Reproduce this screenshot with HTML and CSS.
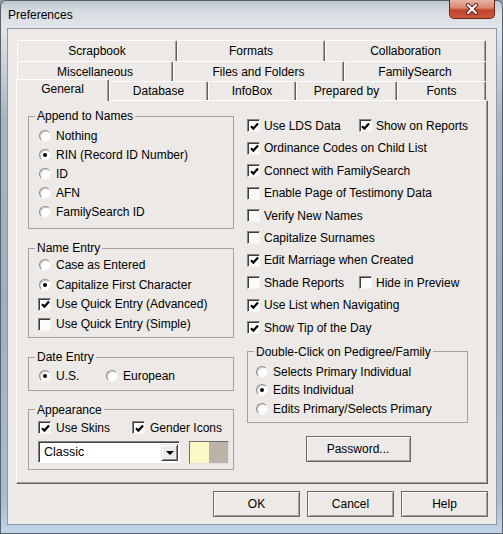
FILE: index.html
```html
<!DOCTYPE html>
<html>
<head>
<meta charset="utf-8">
<title>Preferences</title>
<link rel="stylesheet" href="styles.css">
</head>
<body>
<div class="window">
  <div class="titlebar">
    <span class="title">Preferences</span>
    <span class="close">
      <svg width="16" height="12" viewBox="0 0 16 12">
        <path d="M4 2 L12 10 M12 2 L4 10" stroke="#5a1a10" stroke-width="4" stroke-linecap="round" fill="none"/>
        <path d="M4 2 L12 10 M12 2 L4 10" stroke="#ffffff" stroke-width="2.2" stroke-linecap="round" fill="none"/>
      </svg>
    </span>
  </div>
  <div class="client">
    <div class="tabrow r1">
      <div class="tab w-scrap">Scrapbook</div>
      <div class="tab w-formats">Formats</div>
      <div class="tab w-collab">Collaboration</div>
    </div>
    <div class="tabrow r2">
      <div class="tab w-misc">Miscellaneous</div>
      <div class="tab w-files">Files and Folders</div>
      <div class="tab w-fs">FamilySearch</div>
    </div>
    <div class="tabrow r3">
      <div class="tab sel w-general">General</div>
      <div class="tab w-db">Database</div>
      <div class="tab w-info">InfoBox</div>
      <div class="tab w-prep">Prepared by</div>
      <div class="tab w-fonts">Fonts</div>
    </div>
    <div class="panel">
      <div class="col-left">
        <fieldset class="group g-append">
          <legend>Append to Names</legend>
          <div class="items">
            <div class="opt"><span class="radio"></span>Nothing</div>
            <div class="opt"><span class="radio on"></span>RIN (Record ID Number)</div>
            <div class="opt"><span class="radio"></span>ID</div>
            <div class="opt"><span class="radio"></span>AFN</div>
            <div class="opt"><span class="radio"></span>FamilySearch ID</div>
          </div>
        </fieldset>
        <fieldset class="group g-name">
          <legend>Name Entry</legend>
          <div class="items">
            <div class="opt"><span class="radio"></span>Case as Entered</div>
            <div class="opt"><span class="radio on"></span>Capitalize First Character</div>
            <div class="opt"><span class="check on"><svg width="9" height="9" viewBox="0 0 9 9"><path d="M1 4.2 L3.4 6.6 L8 1.6" stroke="#000" stroke-width="2.2" fill="none"/></svg></span>Use Quick Entry (Advanced)</div>
            <div class="opt"><span class="check"></span>Use Quick Entry (Simple)</div>
          </div>
        </fieldset>
        <fieldset class="group g-date">
          <legend>Date Entry</legend>
          <div class="items">
            <div class="opt">
              <span class="cell w-us"><span class="radio on"></span>U.S.</span>
              <span class="cell"><span class="radio"></span>European</span>
            </div>
          </div>
        </fieldset>
        <fieldset class="group g-appear">
          <legend>Appearance</legend>
          <div class="items">
            <div class="opt">
              <span class="cell w-skins"><span class="check on"><svg width="9" height="9" viewBox="0 0 9 9"><path d="M1 4.2 L3.4 6.6 L8 1.6" stroke="#000" stroke-width="2.2" fill="none"/></svg></span>Use Skins</span>
              <span class="cell"><span class="check on"><svg width="9" height="9" viewBox="0 0 9 9"><path d="M1 4.2 L3.4 6.6 L8 1.6" stroke="#000" stroke-width="2.2" fill="none"/></svg></span>Gender Icons</span>
            </div>
            <div class="skinrow">
              <div class="combo">
                <span class="combo-text">Classic</span>
                <span class="combo-btn"><span class="tri"></span></span>
              </div>
              <div class="swatch"><span class="sw-a"></span><span class="sw-b"></span></div>
            </div>
          </div>
        </fieldset>
      </div>
      <div class="col-right">
        <div class="rows">
          <div class="row">
            <span class="cell w-pair"><span class="check on"><svg width="9" height="9" viewBox="0 0 9 9"><path d="M1 4.2 L3.4 6.6 L8 1.6" stroke="#000" stroke-width="2.2" fill="none"/></svg></span>Use LDS Data</span>
            <span class="cell"><span class="check on"><svg width="9" height="9" viewBox="0 0 9 9"><path d="M1 4.2 L3.4 6.6 L8 1.6" stroke="#000" stroke-width="2.2" fill="none"/></svg></span>Show on Reports</span>
          </div>
          <div class="row"><span class="check on"><svg width="9" height="9" viewBox="0 0 9 9"><path d="M1 4.2 L3.4 6.6 L8 1.6" stroke="#000" stroke-width="2.2" fill="none"/></svg></span>Ordinance Codes on Child List</div>
          <div class="row"><span class="check on"><svg width="9" height="9" viewBox="0 0 9 9"><path d="M1 4.2 L3.4 6.6 L8 1.6" stroke="#000" stroke-width="2.2" fill="none"/></svg></span>Connect with FamilySearch</div>
          <div class="row"><span class="check"></span>Enable Page of Testimony Data</div>
          <div class="row"><span class="check"></span>Verify New Names</div>
          <div class="row"><span class="check"></span>Capitalize Surnames</div>
          <div class="row"><span class="check on"><svg width="9" height="9" viewBox="0 0 9 9"><path d="M1 4.2 L3.4 6.6 L8 1.6" stroke="#000" stroke-width="2.2" fill="none"/></svg></span>Edit Marriage when Created</div>
          <div class="row">
            <span class="cell w-pair2"><span class="check"></span>Shade Reports</span>
            <span class="cell"><span class="check"></span>Hide in Preview</span>
          </div>
          <div class="row"><span class="check on"><svg width="9" height="9" viewBox="0 0 9 9"><path d="M1 4.2 L3.4 6.6 L8 1.6" stroke="#000" stroke-width="2.2" fill="none"/></svg></span>Use List when Navigating</div>
          <div class="row"><span class="check on"><svg width="9" height="9" viewBox="0 0 9 9"><path d="M1 4.2 L3.4 6.6 L8 1.6" stroke="#000" stroke-width="2.2" fill="none"/></svg></span>Show Tip of the Day</div>
        </div>
        <fieldset class="group g-dbl">
          <legend>Double-Click on Pedigree/Family</legend>
          <div class="items">
            <div class="opt"><span class="radio"></span>Selects Primary Individual</div>
            <div class="opt"><span class="radio on"></span>Edits Individual</div>
            <div class="opt"><span class="radio"></span>Edits Primary/Selects Primary</div>
          </div>
        </fieldset>
        <div class="pwrow"><div class="btn btn-pw">Password...</div></div>
      </div>
    </div>
    <div class="buttons">
      <div class="btn">OK</div>
      <div class="btn">Cancel</div>
      <div class="btn">Help</div>
    </div>
  </div>
</div>
</body>
</html>
```

FILE: styles.css
```css
* { box-sizing: border-box; }
html, body { margin: 0; padding: 0; }
body {
  width: 503px;
  height: 534px;
  overflow: hidden;
  font-family: "Liberation Sans", Arial, sans-serif;
  font-size: 12px;
  color: #000;
  background: #8e9cab;
}
.window {
  width: 503px;
  height: 534px;
  display: flex;
  flex-direction: column;
  background: linear-gradient(to bottom, #b9c3cd 0px, #d9dee3 12px, #e2e5e8 28px, #a9b4c1 120px, #9fafc0 300px, #a8bdd2 500px, #c2d6ea 534px);
  border-radius: 6px 6px 0 0;
  box-shadow: inset 0 0 0 1px #56616d;
}
.titlebar {
  height: 28px;
  display: flex;
  justify-content: space-between;
  align-items: flex-start;
  padding-left: 8px;
  flex: none;
}
.title {
  margin-top: 8px;
  line-height: 14px;
  font-size: 12px;
  color: #000;
}
.close {
  width: 46px;
  height: 19px;
  margin-right: 8px;
  border: 1px solid #6b2418;
  border-top: none;
  border-radius: 0 0 5px 5px;
  background: linear-gradient(to bottom, #e7b3a6 0%, #d78471 45%, #c0452c 55%, #c9573c 100%);
  display: flex;
  align-items: center;
  justify-content: center;
}
.client {
  width: 490px;
  height: 497px;
  margin-left: 7px;
  background: #ece9e6;
  border: 1px solid #8d99a6;
  padding-top: 11px;
  flex: none;
}
.tabrow {
  display: flex;
  margin-left: 9px;
}
.r1 { height: 21px; }
.r2 { height: 20px; }
.r3 { height: 19px; margin-left: 8px; }
.tab {
  background: #ece9e6;
  border-top: 1px solid #fff;
  border-left: 1px solid #fff;
  border-right: 1px solid #5f5f5f;
  box-shadow: inset -1px 0 0 #a3a19e;
  border-radius: 2px 2px 0 0;
  text-align: center;
  line-height: 20px;
  white-space: nowrap;
}
.r3 .tab { line-height: 19px; }
.tab.sel {
  position: relative;
  z-index: 1;
  margin-top: -2px;
  height: 22px;
  line-height: 18px;
}
.w-scrap { width: 160px; }
.w-formats { width: 148px; }
.w-collab { width: 161px; }
.w-misc { width: 156px; }
.w-files { width: 171px; }
.w-fs { width: 142px; }
.w-general { width: 93px; }
.w-db { width: 99px; }
.w-info { width: 88px; }
.w-prep { width: 101px; }
.w-fonts { width: 89px; }

.panel {
  width: 472px;
  height: 384px;
  margin-left: 8px;
  border: 1px solid;
  border-color: #fff #5f5f5f #5f5f5f #fff;
  box-shadow: inset -1px -1px 0 #a3a19e;
  padding: 8px 0 0 11px;
  display: flex;
  gap: 13px;
}
.col-left {
  width: 206px;
  display: flex;
  flex-direction: column;
  gap: 12px;
}
.col-right {
  width: 221px;
  display: flex;
  flex-direction: column;
}
.group {
  margin: 0;
  padding: 0;
  border: 1px solid #a5a29e;
  min-width: 0;
}
.group legend {
  margin-left: 6px;
  padding: 0 2px;
  line-height: 14px;
}
.items { padding-left: 10px; }
.opt {
  display: flex;
  align-items: center;
  height: 19px;
  white-space: nowrap;
}
.cell {
  display: flex;
  align-items: center;
  white-space: nowrap;
}
.g-append .items { padding-top: 3px; padding-bottom: 7px; }
.g-name .items { padding-top: 0; padding-bottom: 3px; }
.g-name .opt { height: 19.8px; }
.g-date .items { padding-top: 2.5px; padding-bottom: 4px; }
.g-appear .items { padding-top: 1px; padding-bottom: 5px; }
.g-appear .opt { height: 20px; }
.w-us { width: 67px; }
.w-skins { width: 94px; }

.radio {
  width: 12px;
  height: 12px;
  border-radius: 50%;
  background: #fff;
  border: 1px solid;
  border-color: #8c8c8c #f2f2f2 #f2f2f2 #8c8c8c;
  box-shadow: inset 1px 1px 0 #cfcfcf;
  display: flex;
  align-items: center;
  justify-content: center;
  flex: none;
  margin-right: 5px;
}
.radio.on::after {
  content: "";
  width: 4px;
  height: 4px;
  border-radius: 50%;
  background: #000;
}
.check {
  width: 13px;
  height: 13px;
  background: #fbfbfa;
  border: 1px solid;
  border-color: #858585 #f4f4f4 #f4f4f4 #858585;
  box-shadow: inset 1px 1px 0 #3c3c3c;
  display: flex;
  align-items: center;
  justify-content: center;
  padding: 1px 0 0 1px;
  flex: none;
  margin-right: 5px;
}
.items .check { margin-left: -1px; margin-right: 5px; }
.check svg { display: block; }

.skinrow {
  display: flex;
  align-items: center;
  margin-top: 3px;
  margin-left: -1px;
}
.combo {
  width: 142px;
  height: 22px;
  display: flex;
  background: #fff;
  border: 1px solid;
  border-color: #808080 #fff #fff #808080;
  box-shadow: inset 1px 1px 0 #404040;
  padding: 2px 1px 1px 2px;
}
.combo-text {
  flex: 1;
  padding-left: 3px;
  line-height: 17px;
  font-size: 12.5px;
}
.combo-btn {
  width: 17px;
  height: 17px;
  background: #ece9e6;
  border: 1px solid;
  border-color: #e4e2df #404040 #404040 #e4e2df;
  box-shadow: inset 1px 1px 0 #fff, inset -1px -1px 0 #8a8a8a;
  display: flex;
  align-items: center;
  justify-content: center;
}
.tri {
  width: 0;
  height: 0;
  border-left: 4px solid transparent;
  border-right: 4px solid transparent;
  border-top: 4px solid #000;
  margin-top: 1px;
}
.swatch {
  width: 40px;
  height: 23px;
  margin-left: 9px;
  display: flex;
  border: 1px solid;
  border-color: #707070 #e0e0e0 #e0e0e0 #707070;
  box-shadow: inset 1px 1px 0 #555;
}
.sw-a { flex: 1; background: #fbf8c7; }
.sw-b { flex: 1; background: #bdb3a6; }

.rows {
  padding-top: 5.8px;
  display: flex;
  flex-direction: column;
}
.row {
  height: 22.4px;
  display: flex;
  align-items: center;
  white-space: nowrap;
}
.row > .check { margin-right: 4px; }
.row .cell .check { margin-right: 4px; }
.w-pair { width: 113px; }
.w-pair2 { width: 112px; }
.g-dbl { margin-top: 6.2px; }
.g-dbl .items { padding-left: 8px; padding-top: 3.5px; padding-bottom: 3.5px; }
.g-dbl .opt { height: 18.7px; }
.pwrow {
  display: flex;
  justify-content: center;
  margin-top: 13px;
  padding-left: 1px;
}
.btn {
  width: 87px;
  height: 26px;
  border: 1px solid #696969;
  background: #ece9e6;
  box-shadow: inset 1px 1px 0 #fff, inset -1px -1px 0 #a3a19e;
  display: flex;
  align-items: center;
  justify-content: center;
}
.btn-pw { width: 105px; }
.buttons {
  display: flex;
  gap: 7px;
  margin-top: 7px;
  margin-left: 205px;
}
```
